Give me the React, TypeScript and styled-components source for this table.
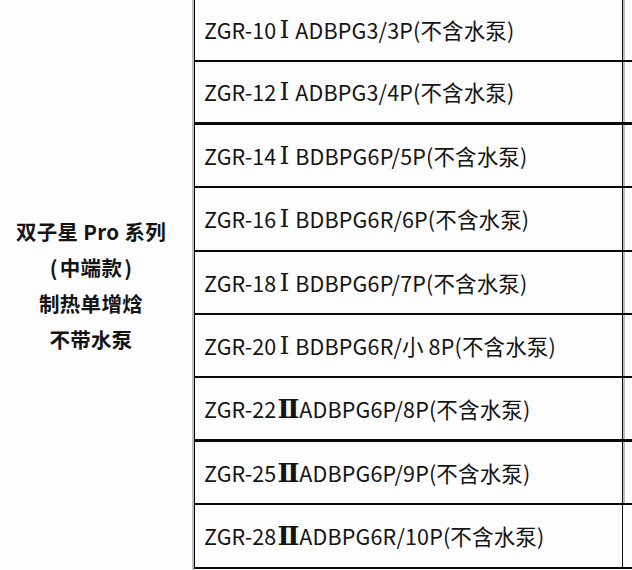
import React from "react";
import styled, { createGlobalStyle } from "styled-components";

const GlobalStyle = createGlobalStyle`
  html, body {
    margin: 0;
    padding: 0;
    background: #fdfdfd;
  }
  body {
    width: 632px;
    height: 570px;
    overflow: hidden;
    font-family: "Noto Sans CJK SC", "Noto Sans", sans-serif;
    color: #141414;
  }
`;

const Table = styled.div`
  display: flex;
  width: 632px;
  height: 570px;
`;

const SeriesCell = styled.div`
  width: 182px;
  padding-right: 10px;
  flex: none;
  display: flex;
  flex-direction: column;
  align-items: center;
  justify-content: center;
  border-right: 2px solid #bdbdbd;
  font-size: 20.5px;
  font-weight: 700;
  line-height: 36px;
  letter-spacing: 0.3px;
`;

const Paren = styled.span`
  padding: 0 2px;
`;

const Models = styled.div`
  flex: 1;
  display: flex;
  flex-direction: column;
`;

const Row = styled.div<{ $first?: boolean; $thick?: boolean }>`
  height: ${(p) => (p.$first ? "61.5px" : "63.4px")};
  box-sizing: border-box;
  display: flex;
  border-bottom: ${(p) => (p.$thick ? "3px" : "2px")} solid #0a0a0a;
`;

const ModelCell = styled.div`
  width: 429px;
  flex: none;
  box-sizing: border-box;
  display: flex;
  align-items: center;
  padding-left: 9px;
  border-left: 1.5px solid #0a0a0a;
  border-right: 1.5px solid #0a0a0a;
  font-size: 21.5px;
  letter-spacing: 0.15px;
  white-space: nowrap;
`;

const Numeral = styled.span<{ $double?: boolean }>`
  font-family: "DejaVu Serif", "Liberation Serif", serif;
  font-size: ${(p) => (p.$double ? "26px" : "25px")};
  font-weight: ${(p) => (p.$double ? 700 : 400)};
  line-height: 1;
  margin: ${(p) => (p.$double ? "0 0 0 1px" : "0 6px 0 3px")};
  letter-spacing: 0;
`;

const Gutter = styled.div<{ $last?: boolean }>`
  flex: 1;
  border-left: ${(p) => (p.$last ? "none" : "2px solid #bdbdbd")};
`;

const models = [
  { head: "ZGR-10", grade: "Ⅰ", tail: "ADBPG3/3P(不含水泵)" },
  { head: "ZGR-12", grade: "Ⅰ", tail: "ADBPG3/4P(不含水泵)", thick: true },
  { head: "ZGR-14", grade: "Ⅰ", tail: "BDBPG6P/5P(不含水泵)" },
  { head: "ZGR-16", grade: "Ⅰ", tail: "BDBPG6R/6P(不含水泵)" },
  { head: "ZGR-18", grade: "Ⅰ", tail: "BDBPG6P/7P(不含水泵)" },
  { head: "ZGR-20", grade: "Ⅰ", tail: "BDBPG6R/小 8P(不含水泵)" },
  { head: "ZGR-22", grade: "Ⅱ", tail: "ADBPG6P/8P(不含水泵)", thick: true },
  { head: "ZGR-25", grade: "Ⅱ", tail: "ADBPG6P/9P(不含水泵)" },
  { head: "ZGR-28", grade: "Ⅱ", tail: "ADBPG6R/10P(不含水泵)" },
];

export default function App() {
  return (
    <>
      <GlobalStyle />
      <Table>
        <SeriesCell>
          <span>双子星 Pro 系列</span>
          <span>
            <Paren>(</Paren>中端款<Paren>)</Paren>
          </span>
          <span>制热单增焓</span>
          <span>不带水泵</span>
        </SeriesCell>
        <Models>
          {models.map((m, i) => (
            <Row key={m.head} $first={i === 0} $thick={m.thick}>
              <ModelCell>
                {m.head}
                <Numeral $double={m.grade === "Ⅱ"}>{m.grade}</Numeral>
                {m.tail}
              </ModelCell>
              <Gutter $last={i === models.length - 1} />
            </Row>
          ))}
        </Models>
      </Table>
    </>
  );
}
